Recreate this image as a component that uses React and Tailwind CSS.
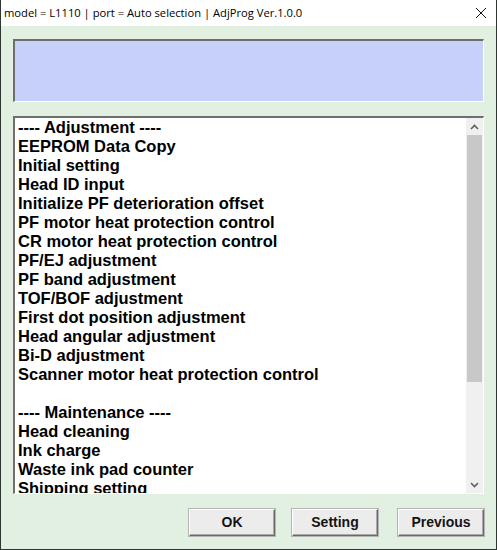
import React from 'react';

const items = [
  '---- Adjustment ----',
  'EEPROM Data Copy',
  'Initial setting',
  'Head ID input',
  'Initialize PF deterioration offset',
  'PF motor heat protection control',
  'CR motor heat protection control',
  'PF/EJ adjustment',
  'PF band adjustment',
  'TOF/BOF adjustment',
  'First dot position adjustment',
  'Head angular adjustment',
  'Bi-D adjustment',
  'Scanner motor heat protection control',
  '',
  '---- Maintenance ----',
  'Head cleaning',
  'Ink charge',
  'Waste ink pad counter',
  'Shipping setting',
];

const Btn = ({ label, className = '' }) => (
  <button
    className={`h-[27px] w-[86px] bg-[#ececec] border border-t-white border-l-white border-b-[#6a6a6a] border-r-[#6a6a6a] shadow-[inset_-1px_-1px_0_#a9a9a9,0_0_0_1px_#b4b4b4] text-[14px] font-bold text-[#141414] ${className}`}
  >
    {label}
  </button>
);

const Arrow = ({ up }) => (
  <svg width="9" height="6" viewBox="0 0 9 6">
    <polyline
      points={up ? '1,5 4.5,1.5 8,5' : '1,1 4.5,4.5 8,1'}
      fill="none"
      stroke="#606060"
      strokeWidth="1.6"
    />
  </svg>
);

export default function App() {
  return (
    <div
      className="w-[497px] h-[550px] flex flex-col border-x border-b border-[#2e3632] bg-[#e1f0e1]"
      style={{ fontFamily: '"Liberation Sans", Arial, sans-serif' }}
    >
      {/* title bar */}
      <div className="h-[26px] bg-white flex items-center justify-between pl-[3px] pr-[9px]">
        <span
          className="text-[11.2px] text-black"
          style={{ fontFamily: '"Open Sans", "Noto Sans", sans-serif' }}
        >
          model = L1110 | port = Auto selection | AdjProg Ver.1.0.0
        </span>
        <svg width="12" height="12" viewBox="0 0 12 12">
          <path d="M1 1L11 11M11 1L1 11" stroke="#111" strokeWidth="1" />
        </svg>
      </div>

      <div className="flex-1 flex flex-col px-[12px] pt-[13px] pb-[13px]">
        {/* status panel */}
        <div className="h-[63px] bg-[#c6d0f9] border-t-2 border-l-2 border-t-[#6e6e6e] border-l-[#6e6e6e] border-b border-r border-b-white border-r-white" />

        {/* list box */}
        <div className="mt-[14px] h-[378px] flex bg-white border-t-2 border-l-2 border-t-[#6e6e6e] border-l-[#6e6e6e] border-b border-r border-b-white border-r-white">
          <div className="flex-1 overflow-hidden pl-[3px]">
            {items.map((t, i) => (
              <div key={i} className="h-[19px] leading-[19px] text-[16.5px] font-bold text-black whitespace-nowrap">
                {t}
              </div>
            ))}
          </div>
          <div className="w-[17px] flex flex-col bg-[#f0f0f0]">
            <div className="h-[17px] flex items-center justify-center">
              <Arrow up />
            </div>
            <div className="h-[247px] mx-[1px] bg-[#c8c8c8]" />
            <div className="flex-1" />
            <div className="h-[17px] flex items-center justify-center">
              <Arrow />
            </div>
          </div>
        </div>

        {/* buttons */}
        <div className="mt-[15px] flex justify-end">
          <Btn label="OK" />
          <Btn label="Setting" className="ml-[17px] w-[85px]" />
          <Btn label="Previous" className="ml-[20px] w-[85px]" />
        </div>
      </div>
    </div>
  );
}
